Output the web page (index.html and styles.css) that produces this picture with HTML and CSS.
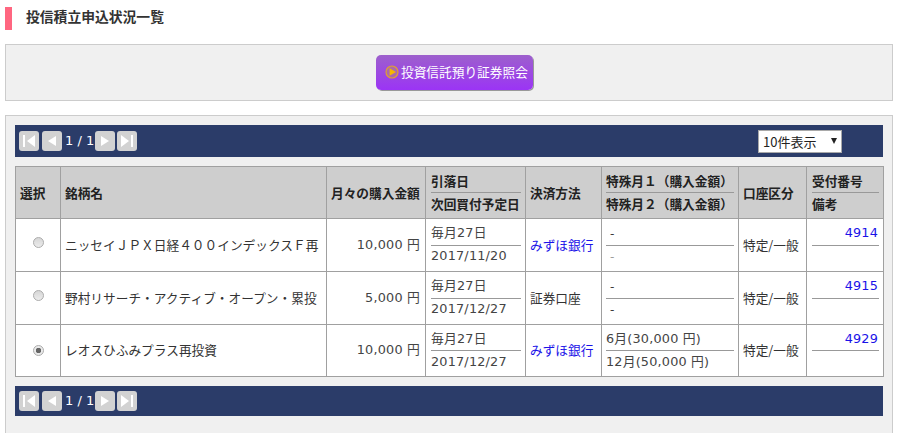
FILE: index.html
```html
<!DOCTYPE html>
<html lang="ja">
<head>
<meta charset="utf-8">
<title>投信積立申込状況一覧</title>
<link rel="stylesheet" href="styles.css">
</head>
<body>
<h1 class="heading">投信積立申込状況一覧</h1>
<div class="action-panel">
  <a class="action-btn">
    <svg class="play" width="14" height="14" viewBox="0 0 14 14"><circle cx="7" cy="7" r="6" fill="#c9a04a" fill-opacity=".35" stroke="#e0a030" stroke-width="1.2"/><path d="M4.6 3.2 11 7 4.6 10.8Z" fill="#f5b800"/></svg>
    <span>投資信託預り証券照会</span>
  </a>
</div>
<div class="list-panel">
  <div class="pager pager-top">
    <div class="pager-left">
      <span class="pg"><svg width="20" height="20" viewBox="0 0 20 20"><path d="M4 4h2v12H4zM16 4v12L8 10z" fill="#fff"/></svg></span>
      <span class="pg"><svg width="20" height="20" viewBox="0 0 20 20"><path d="M14 5v10L6 10z" fill="#fff"/></svg></span>
      <span class="count">1 / 1</span>
      <span class="pg"><svg width="20" height="20" viewBox="0 0 20 20"><path d="M6 5v10l8-5z" fill="#fff"/></svg></span>
      <span class="pg"><svg width="20" height="20" viewBox="0 0 20 20"><path d="M14 4h2v12h-2zM4 4v12l8-6z" fill="#fff"/></svg></span>
    </div>
    <div class="select-box"><span>10件表示</span><i class="caret"></i></div>
  </div>
  <table class="list">
    <colgroup>
      <col class="c1"><col class="c2"><col class="c3"><col class="c4"><col class="c5"><col class="c6"><col class="c7"><col class="c8">
    </colgroup>
    <thead>
      <tr>
        <th>選択</th>
        <th>銘柄名</th>
        <th>月々の購入金額</th>
        <th class="stack"><div class="top">引落日</div><div class="bot">次回買付予定日</div></th>
        <th>決済方法</th>
        <th class="stack"><div class="top">特殊月１（購入金額）</div><div class="bot">特殊月２（購入金額）</div></th>
        <th>口座区分</th>
        <th class="stack"><div class="top">受付番号</div><div class="bot">備考</div></th>
      </tr>
    </thead>
    <tbody>
      <tr>
        <td class="center"><span class="radio"></span></td>
        <td class="plain">ニッセイＪＰＸ日経４００インデックスＦ再</td>
        <td class="plain right wide">10,000 円</td>
        <td class="stack wide"><div class="top">毎月27日</div><div class="bot">2017/11/20</div></td>
        <td class="plain link">みずほ銀行</td>
        <td class="stack"><div class="top dash">-</div><div class="bot dash muted">-</div></td>
        <td class="plain">特定/一般</td>
        <td class="stack"><div class="top right link wide">4914</div><div class="bot">&nbsp;</div></td>
      </tr>
      <tr>
        <td class="center"><span class="radio"></span></td>
        <td class="plain">野村リサーチ・アクティブ・オープン・累投</td>
        <td class="plain right wide">5,000 円</td>
        <td class="stack wide"><div class="top">毎月27日</div><div class="bot">2017/12/27</div></td>
        <td class="plain">証券口座</td>
        <td class="stack"><div class="top dash">-</div><div class="bot dash">-</div></td>
        <td class="plain">特定/一般</td>
        <td class="stack"><div class="top right link wide">4915</div><div class="bot">&nbsp;</div></td>
      </tr>
      <tr>
        <td class="center"><span class="radio on"></span></td>
        <td class="plain">レオスひふみプラス再投資</td>
        <td class="plain right wide">10,000 円</td>
        <td class="stack wide"><div class="top">毎月27日</div><div class="bot">2017/12/27</div></td>
        <td class="plain link">みずほ銀行</td>
        <td class="stack wide"><div class="top">6月(30,000 円)</div><div class="bot">12月(50,000 円)</div></td>
        <td class="plain">特定/一般</td>
        <td class="stack"><div class="top right link wide">4929</div><div class="bot">&nbsp;</div></td>
      </tr>
    </tbody>
  </table>
  <div class="pager pager-bottom">
    <div class="pager-left">
      <span class="pg"><svg width="20" height="20" viewBox="0 0 20 20"><path d="M4 4h2v12H4zM16 4v12L8 10z" fill="#fff"/></svg></span>
      <span class="pg"><svg width="20" height="20" viewBox="0 0 20 20"><path d="M14 5v10L6 10z" fill="#fff"/></svg></span>
      <span class="count">1 / 1</span>
      <span class="pg"><svg width="20" height="20" viewBox="0 0 20 20"><path d="M6 5v10l8-5z" fill="#fff"/></svg></span>
      <span class="pg"><svg width="20" height="20" viewBox="0 0 20 20"><path d="M14 4h2v12h-2zM4 4v12l8-6z" fill="#fff"/></svg></span>
    </div>
  </div>
</div>
</body>
</html>
```
FILE: styles.css
```css
* { box-sizing: border-box; }
html, body { height: 100%; }
body {
  margin: 0;
  padding: 7px 7px 0 5px;
  background: #fff;
  color: #333;
  font: 12px/1.5 "DejaVu Sans", "Noto Sans CJK JP", sans-serif;
  overflow: hidden;
}
.heading {
  margin: 0 0 14px;
  height: 23px;
  border-left: 7px solid #ff6680;
  padding-left: 14px;
  font: bold 13.8px/19px "Noto Sans CJK JP", sans-serif;
  color: #333;
}
.action-panel {
  height: 57px;
  margin-bottom: 14px;
  background: #f0f0f0;
  border: 1px solid #ccc;
  display: flex;
  align-items: center;
  justify-content: center;
}
.action-btn {
  display: flex;
  align-items: center;
  gap: 2px;
  width: 157px;
  height: 35px;
  margin: -1px 0 0 11px;
  padding: 0 0 0 9px;
  border-radius: 5px;
  background: linear-gradient(#9d60cc, #9b34f5);
  box-shadow: 1px 1px 0 #999;
  color: #fff;
  font: 12.7px/1 "Noto Sans CJK JP", sans-serif;
  white-space: nowrap;
}
.play { flex: none; }
.list-panel {
  height: 330px;
  padding: 9px 9px 0;
  background: #f0f0f0;
  border: 1px solid #ccc;
  border-bottom: 0;
}
.pager {
  display: flex;
  align-items: center;
  justify-content: space-between;
  background: #2b3c69;
  padding: 0 4px;
}
.pager-top { height: 32px; margin-bottom: 9px; padding-right: 41px; }
.pager-bottom { height: 30px; margin-top: 9px; }
.pager-left { display: flex; align-items: center; gap: 3px; }
.pg {
  width: 20px;
  height: 20px;
  border-radius: 3px;
  background: #d2d2d2;
  display: flex;
}
.pg:last-child { margin-left: -1px; }
.count {
  color: #fff;
  font: 13px/20px "DejaVu Sans", sans-serif;
  margin: 0 -3px 0 0;
  width: 30px;
}
.select-box {
  width: 84px;
  height: 23px;
  background: #fff;
  border: 1px solid #a9a9a9;
  padding-left: 4px;
  display: flex;
  align-items: center;
  justify-content: space-between;
  color: #222;
  font: 13px/1 "Noto Sans CJK JP", sans-serif;
}
.caret {
  width: 0;
  height: 0;
  margin-right: 4px;
  border: 3.5px solid transparent;
  border-top: 6px solid #222;
  border-bottom: 0;
}
.list {
  width: 868px;
  table-layout: fixed;
  border-collapse: collapse;
  background: #fff;
}
.c1 { width: 45px; }
.c2 { width: 266px; }
.c3 { width: 99px; }
.c4 { width: 100px; }
.c5 { width: 76px; }
.c6 { width: 137px; }
.c7 { width: 68px; }
.c8 { width: 77px; }
.list th, .list td {
  border: 1px solid #a0a0a0;
  padding: 0 4px;
  white-space: nowrap;
  overflow: hidden;
  font-family: "Noto Sans CJK JP", sans-serif;
}
.list th {
  height: 52px;
  background: #cecece;
  color: #222;
  font-size: 12.7px;
  font-weight: bold;
  text-align: left;
  line-height: 25px;
}
.list td {
  height: 53px;
  font-size: 12.7px;
  color: #333;
  line-height: 25px;
}
.list tbody tr:last-child td { height: 52px; }
.list td.plain { padding-bottom: 2px; }
.list td.wide, .list .wide {
  font-family: "DejaVu Sans", "Noto Sans CJK JP", sans-serif;
  font-size: 12.8px;
  letter-spacing: .2px;
  color: #444;
}
.list td.right { padding-right: 5px; }
.list .top.right { padding-right: 1px; }
.list td.stack:nth-child(4), .list th.stack:nth-child(4),
.list td.stack:nth-child(8), .list th.stack:nth-child(8) { padding-left: 5px; }
.list td .top { height: 27px; line-height: 28px; border-bottom: 1px solid #999; }
.list td .bot { height: 25px; line-height: 20px; }
.list tbody tr:last-child td .top { height: 26px; line-height: 28px; }
.list tbody tr:last-child td .bot { line-height: 22px; }
.list th .top { height: 26px; line-height: 27px; border-bottom: 1px solid #999; }
.list th .bot { height: 25px; line-height: 21px; }
.center { text-align: center; }
.list td.right, .list .right { text-align: right; }
.list .link, .list td.link { color: #1a12e8; }
.dash { padding-left: 4px; }
.muted { color: #999; }
.radio {
  display: inline-block;
  vertical-align: 3px;
  width: 11px;
  height: 11px;
  border-radius: 50%;
  border: 1px solid #adadad;
  background: linear-gradient(#d6d6d6, #ececec);
}
.radio.on {
  vertical-align: 0;
  background: radial-gradient(circle, #666 0 2.5px, #eaeaea 3px);
}
```
